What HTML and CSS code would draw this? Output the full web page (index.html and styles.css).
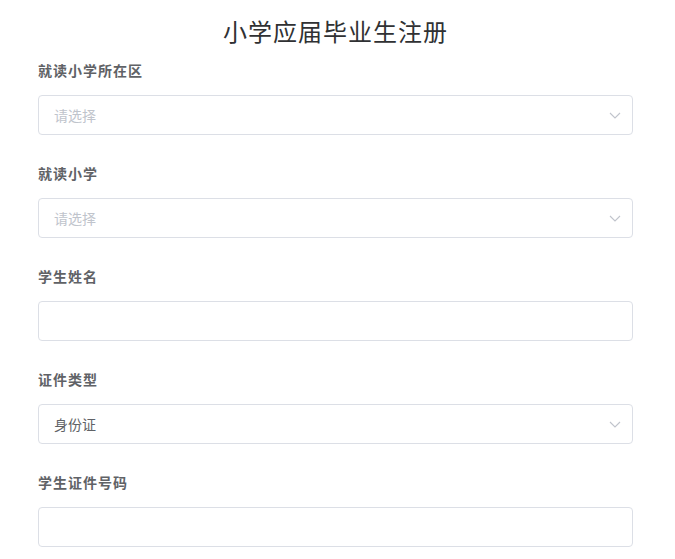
FILE: index.html
```html
<!DOCTYPE html>
<html lang="zh-CN">
<head>
<meta charset="utf-8">
<title>小学应届毕业生注册</title>
<link rel="stylesheet" href="styles.css">
</head>
<body>
<div class="page">
  <h1 class="title">小学应届毕业生注册</h1>
  <form class="form">
    <div class="item">
      <label class="label">就读小学所在区</label>
      <div class="field select">
        <span class="placeholder">请选择</span>
        <svg class="arrow" width="12" height="7" viewBox="0 0 12 7"><path d="M1 1 L6 6 L11 1" fill="none" stroke="#c0c4cc" stroke-width="1.1"/></svg>
      </div>
    </div>
    <div class="item">
      <label class="label">就读小学</label>
      <div class="field select">
        <span class="placeholder">请选择</span>
        <svg class="arrow" width="12" height="7" viewBox="0 0 12 7"><path d="M1 1 L6 6 L11 1" fill="none" stroke="#c0c4cc" stroke-width="1.1"/></svg>
      </div>
    </div>
    <div class="item">
      <label class="label">学生姓名</label>
      <div class="field"></div>
    </div>
    <div class="item">
      <label class="label">证件类型</label>
      <div class="field select">
        <span class="value">身份证</span>
        <svg class="arrow" width="12" height="7" viewBox="0 0 12 7"><path d="M1 1 L6 6 L11 1" fill="none" stroke="#c0c4cc" stroke-width="1.1"/></svg>
      </div>
    </div>
    <div class="item">
      <label class="label">学生证件号码</label>
      <div class="field"></div>
    </div>
  </form>
</div>
</body>
</html>
```
FILE: styles.css
```css
html, body {
  margin: 0;
  padding: 0;
  background: #ffffff;
}
body {
  font-family: "Noto Sans CJK SC", "Noto Sans", sans-serif;
  color: #606266;
  overflow: hidden;
}
.page {
  width: 595px;
  margin-left: 38px;
}
.title {
  margin: 15px 0 13px;
  font-size: 24px;
  line-height: 32px;
  font-weight: 400;
  letter-spacing: 1px;
  color: #303133;
  text-align: center;
}
.form {
  display: flex;
  flex-direction: column;
  gap: 28px;
}
.item {
  display: flex;
  flex-direction: column;
}
.label {
  font-size: 14px;
  line-height: 20px;
  font-weight: 700;
  letter-spacing: 1px;
  color: #606266;
  margin-bottom: 15px;
}
.field {
  box-sizing: border-box;
  height: 40px;
  border: 1px solid #dcdfe6;
  border-radius: 4px;
  padding: 0 15px;
  display: flex;
  align-items: center;
  justify-content: space-between;
  font-size: 14px;
}
.placeholder {
  color: #c0c4cc;
}
.value {
  color: #606266;
}
.arrow {
  margin-right: -4px;
}
```
